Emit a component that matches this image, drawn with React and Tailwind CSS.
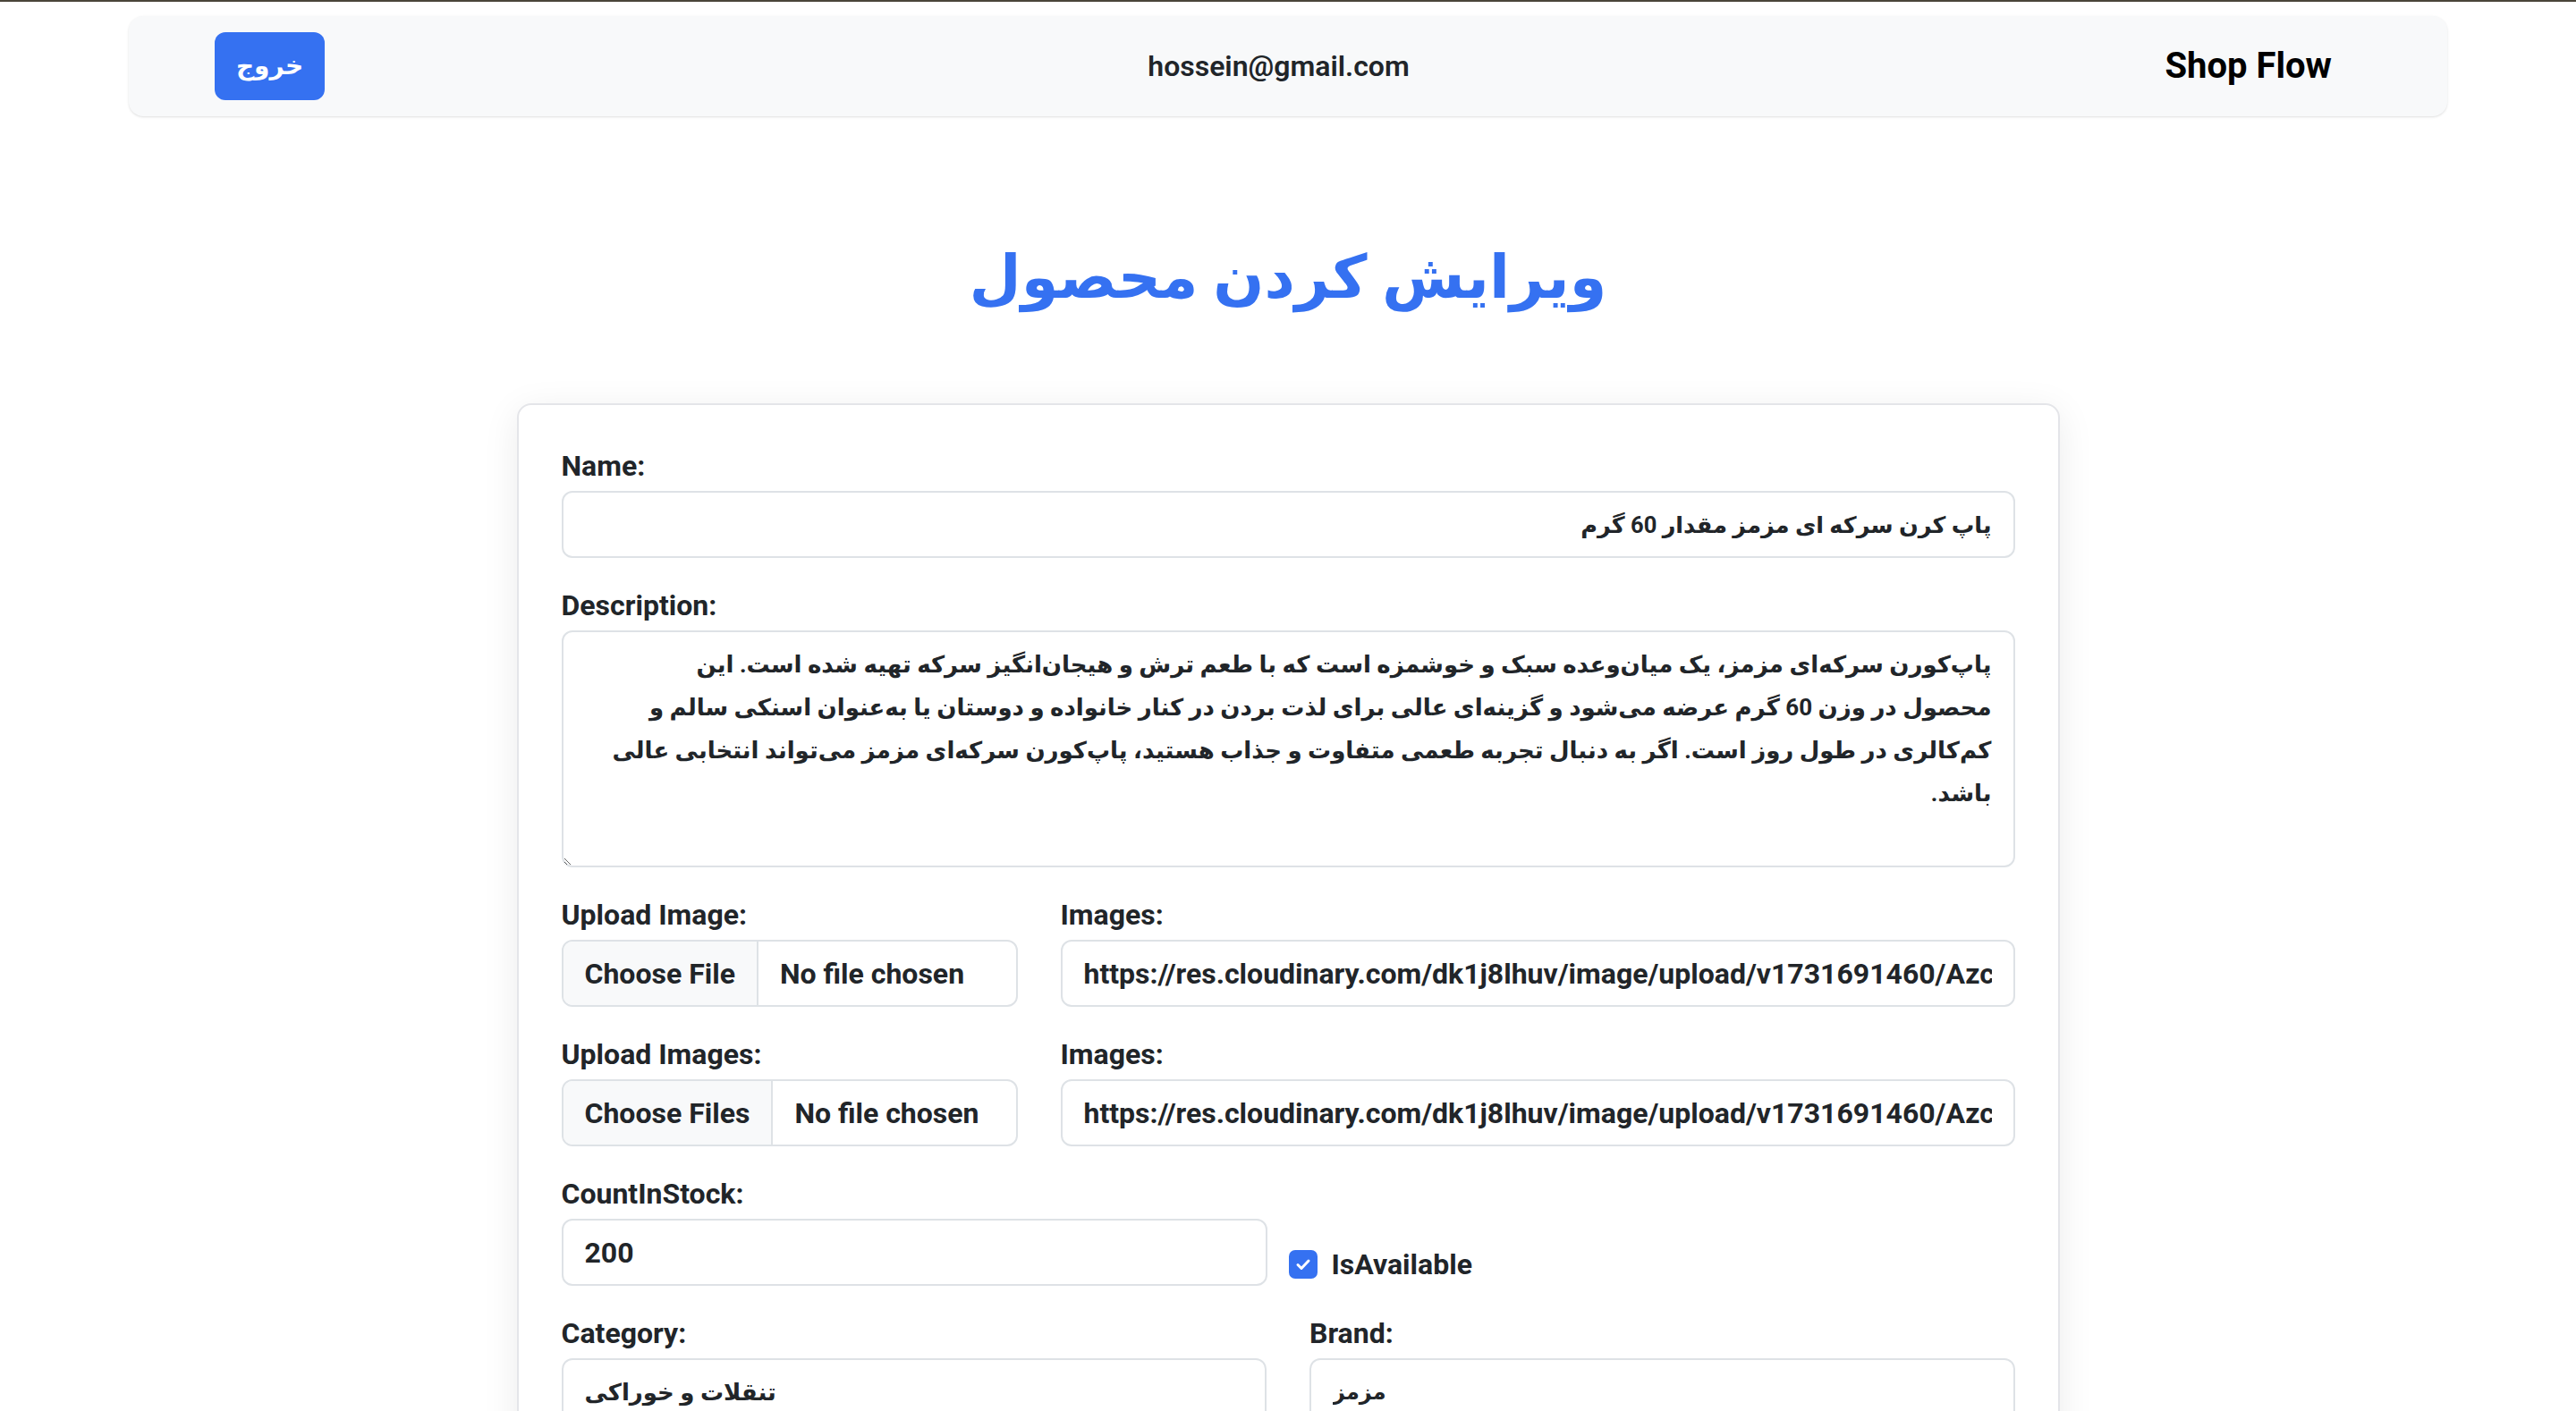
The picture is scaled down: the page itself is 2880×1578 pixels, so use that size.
import React from 'react'

const description =
  'پاپ\u200cکورن سرکه\u200cای مزمز، یک میان\u200cوعده سبک و خوشمزه است که با طعم ترش و هیجان\u200cانگیز سرکه تهیه شده است. این\n' +
  'محصول در وزن 60 گرم عرضه می\u200cشود و گزینه\u200cای عالی برای لذت بردن در کنار خانواده و دوستان یا به\u200cعنوان اسنکی سالم و\n' +
  'کم\u200cکالری در طول روز است. اگر به دنبال تجربه طعمی متفاوت و جذاب هستید، پاپ\u200cکورن سرکه\u200cای مزمز می\u200cتواند انتخابی عالی\n' +
  'باشد.'

const imageUrl =
  'https://res.cloudinary.com/dk1j8lhuv/image/upload/v1731691460/Azcpopcorn_vinegar_60g_mazmaz.jpg'

// shared input look (bootstrap-ish at 2x)
const inputCls =
  'block w-full h-[75px] px-[24px] rounded-[12px] border-2 border-[#dee2e6] bg-white font-bold text-[#212529] outline-none'

function Label({ children }) {
  return (
    <label className="block text-[32px] leading-[48px] font-bold text-[#212529] mb-[4px]">
      {children}
    </label>
  )
}

function FileBox({ button }) {
  return (
    <div className="flex items-center h-[75px] rounded-[12px] border-2 border-[#dee2e6] overflow-hidden bg-white">
      <div className="h-full flex items-center px-[24px] bg-[#f8f9fa] border-r-2 border-[#dee2e6] text-[32px] font-bold text-[#212529]">
        {button}
      </div>
      <span className="ml-[24px] text-[32px] font-bold text-[#212529]">No file chosen</span>
    </div>
  )
}

export default function App() {
  return (
    <div className="min-h-screen bg-white font-[Roboto,'DejaVu_Sans',sans-serif] text-[#212529]">
      <div className="h-[2px] bg-[#4a453a]" />

      {/* navbar */}
      <div className="mx-auto mt-[16px] w-[2592px] h-[112px] rounded-[16px] bg-[#f8f9fa] shadow-sm pl-[96px] pr-[129px] grid grid-cols-3 items-center">
        <div className="flex">
          <button className="w-[123px] h-[76px] rounded-[12px] bg-[#3571f1] text-white text-[28px] font-bold">
            خروج
          </button>
        </div>
        <div className="pl-[12px] text-center text-[32px] font-semibold">hossein@gmail.com</div>
        <div className="text-right text-[40px] font-bold text-black">Shop Flow</div>
      </div>

      <h1 className="mt-[120px] mb-[81px] text-center text-[67px] leading-[120px] font-bold text-[#3571f1]">
        ویرایش کردن محصول
      </h1>

      <div className="mx-auto w-[1725px] rounded-[16px] border-2 border-[#e4e5e9] bg-white shadow-[0_8px_40px_rgba(0,0,0,0.08)] px-[48px] pt-[44px] pb-[48px]">
        <div className="mb-[29px]">
          <Label>Name:</Label>
          <input dir="rtl" className={`${inputCls} text-[25.5px]`} defaultValue="پاپ کرن سرکه ای مزمز مقدار 60 گرم" />
        </div>

        <div className="mb-[29px]">
          <Label>Description:</Label>
          <textarea
            dir="rtl"
            rows={5}
            className="block w-full h-[265px] px-[24px] py-[12px] rounded-[12px] border-2 border-[#dee2e6] text-[26px] leading-[48px] font-bold text-[#212529] outline-none"
            defaultValue={description}
          />
        </div>

        <div className="grid grid-cols-[510px_1fr] gap-x-[48px] mb-[29px]">
          <div>
            <Label>Upload Image:</Label>
            <FileBox button="Choose File" />
          </div>
          <div>
            <Label>Images:</Label>
            <input className={`${inputCls} text-[32px]`} defaultValue={imageUrl} />
          </div>
        </div>

        <div className="grid grid-cols-[510px_1fr] gap-x-[48px] mb-[29px]">
          <div>
            <Label>Upload Images:</Label>
            <FileBox button="Choose Files" />
          </div>
          <div>
            <Label>Images:</Label>
            <input className={`${inputCls} text-[32px]`} defaultValue={imageUrl} />
          </div>
        </div>

        <div className="flex items-end mb-[29px]">
          <div className="w-[789px]">
            <Label>CountInStock:</Label>
            <input className={`${inputCls} text-[32px]`} defaultValue="200" />
          </div>
          <label className="ml-[24px] flex items-center gap-[16px] h-[48px]">
            <span className="w-[32px] h-[32px] rounded-[7px] bg-[#3571f1] flex items-center justify-center">
              <svg width="20" height="20" viewBox="0 0 20 20" fill="none">
                <path d="M4 10.5l4 4 8-8.5" stroke="white" strokeWidth="3" strokeLinecap="round" strokeLinejoin="round" />
              </svg>
            </span>
            <span className="text-[32px] font-bold">IsAvailable</span>
          </label>
        </div>

        <div className="grid grid-cols-2 gap-x-[48px] mb-[29px]">
          <div>
            <Label>Category:</Label>
            <input className={`${inputCls} text-[26px]`} defaultValue="تنقلات و خوراکی" />
          </div>
          <div>
            <Label>Brand:</Label>
            <input className={`${inputCls} text-[24px]`} defaultValue="مزمز" />
          </div>
        </div>

        <div className="mb-[29px]">
          <Label>Price:</Label>
          <input className={`${inputCls} text-[32px]`} defaultValue="45000" />
        </div>

        <button className="w-full h-[76px] rounded-[12px] bg-[#3571f1] text-white text-[28px] font-bold">
          ذخیره تغییرات
        </button>
      </div>
      <div className="h-[96px]" />
    </div>
  )
}
